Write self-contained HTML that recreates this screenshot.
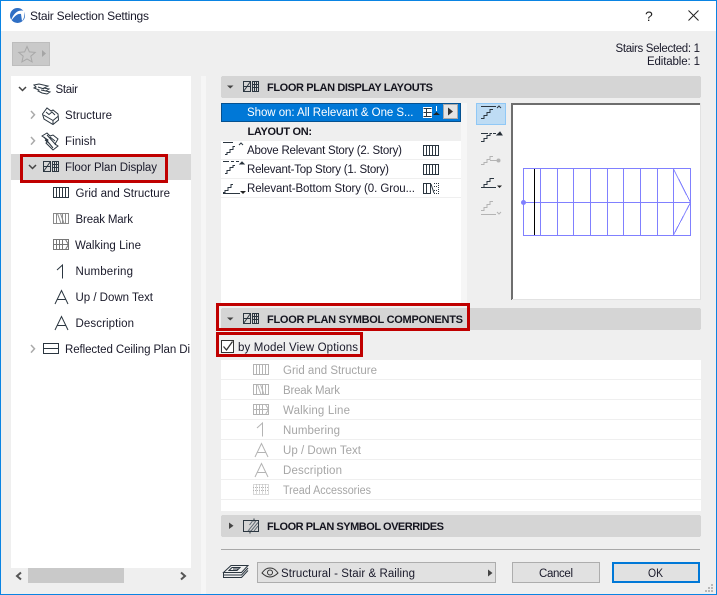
<!DOCTYPE html>
<html><head><meta charset="utf-8"><title>Stair Selection Settings</title>
<style>
html,body{margin:0;padding:0;background:#efefef;width:717px;height:595px;overflow:hidden}
svg{display:block;position:absolute;left:0;top:0}
text{font-family:"Liberation Sans",sans-serif;font-size:11.5px;fill:#1a1a2a}
.b{font-weight:bold;font-size:11px;fill:#14141e}
.g{fill:#a6a6a6}
.i{fill:none;stroke:#2b3640;stroke-width:1}
.l{fill:none;stroke:#b4b4b4;stroke-width:1}
</style></head><body>
<svg width="717" height="595" viewBox="0 0 717 595" xmlns="http://www.w3.org/2000/svg" shape-rendering="crispEdges">
<defs>
<g id="grid"><rect x=".5" y=".5" width="15" height="10"/><path d="M3.5 .5v10M6.5 .5v10M9.500 .5v10M12.500 .5v10"/></g>
<g id="brk"><rect x=".5" y=".5" width="15" height="10"/><path d="M3.500 .5v10M12.500 .5v10"/><path d="M4.500 .5l3.500 10M7.500 .5l3.500 10M9.500 .5v10" shape-rendering="auto"/></g>
<g id="walk"><rect x=".5" y=".5" width="15" height="10"/><path d="M.5 5.5h15M3.5 .5v10M6.5 .5v10M9.5 .5v10"/><path d="M12.5 .5l3 5-3 5" shape-rendering="auto"/></g>
<g id="num"><path d="M6.5 14.500V1L1 6" shape-rendering="auto"/></g>
<g id="aa"><path d="M0 14L6.500 .5L13 14M2.500 9.500h8" shape-rendering="auto"/></g>
<g id="plan"><rect x=".5" y=".5" width="7" height="10"/><path d="M.5 5.5h7"/><path d="M.5 10.5l7-10" shape-rendering="auto"/><path d="M9.5 .5h6v10h-6zM9.5 3.5h6M9.5 6.5h6M11.5 .5v10M13.5 .5v10"/></g>
</defs>

<!-- window -->
<rect x="0" y="0" width="717" height="595" fill="#0a84e3"/>
<rect x="1" y="1" width="715" height="593" fill="#efefef"/>
<rect x="1" y="1" width="715" height="30" fill="#fff"/>

<!-- logo -->
<circle cx="17.500" cy="15.500" r="7.500" fill="#2f6fc4" shape-rendering="auto"/>
<path d="M11 21C13 14 18 9 24 11C25 15 24 19 22 21L21 14C17 13 14 17 11 21Z" fill="#fff" shape-rendering="auto"/>
<text x="30" y="20" textLength="119" style="font-size:12px">Stair Selection Settings</text>
<text x="645" y="21" style="font-size:14px;fill:#222">?</text>
<path d="M688.500 10.500l10 10M698.500 10.500l-10 10" stroke="#222" fill="none" shape-rendering="auto"/>

<!-- favorites -->
<rect x="12.500" y="42.500" width="37" height="23" fill="#c9c9c9" stroke="#bdbdbd"/>
<path d="M27 46.500l2.400 5.400 5.800.5-4.400 3.800 1.300 5.700-5.100-3-5.100 3 1.300-5.700-4.400-3.800 5.800-.5z" fill="none" stroke="#a8a8a8" shape-rendering="auto"/>
<path d="M42 50l4 3.500-4 3.500z" fill="#a5a5a5" shape-rendering="auto"/>
<text x="615.500" y="52" textLength="84.500">Stairs Selected: 1</text>
<text x="647" y="65" textLength="53">Editable: 1</text>

<!-- tree -->
<rect x="11" y="76" width="180" height="492" fill="#fff"/>
<rect x="11" y="154" width="180" height="26" fill="#d8d8d8"/>
<rect x="201" y="76" width="5" height="518" fill="#f6f6f6"/>
<g fill="none" stroke-width="1.500" shape-rendering="auto">
<path d="M19 87l3.500 3.500 3.500-3.500" stroke="#444"/>
<path d="M31 111l3.500 3.800-3.500 3.800M31 137l3.500 3.800-3.500 3.800M31 345l3.500 3.800-3.500 3.800" stroke="#aaa"/>
<path d="M29 165l3.500 3.500 3.500-3.500" stroke="#444"/>
</g>
<!-- stair / structure / finish icons -->
<g class="i" shape-rendering="auto">
<path d="M34 85l5-1 9 2-4 2 5 1-3 2 4 1-3 2-5-1-4-2 1-1-5-2 2-1z"/>
<path d="M38 87l6 2M41 90l5 1"/>
<path d="M42.500 114L47 108L51 111L53 110L58 114L58.500 120L53 124.500L44 119Z"/>
<path d="M46 112L49 114.500L52 112L55 115M43.500 115L53 120.500V124.500M53 120.500L58.500 116"/>
<path d="M42 136L47 133L50 136L53 135L58 139L55 144L58 146L53 150L50 147L46 143L48 140Z"/>
<path d="M44 137L53 148M47 135L56 145M50 137L55 141M45 140L50 144"/>
</g>
<use href="#plan" x="43" y="161" class="i"/>
<use href="#grid" x="53" y="187" class="i"/>
<use href="#brk" x="53" y="213" style="stroke:#8a8a8a;fill:none"/>
<use href="#walk" x="53" y="239" style="stroke:#777;fill:none"/>
<use href="#num" x="56" y="264" class="i"/>
<use href="#aa" x="55" y="290" class="i"/>
<use href="#aa" x="55" y="316" class="i"/>
<g class="i"><rect x="43.500" y="343.500" width="15" height="10"/><path d="M43.500 348.500h15"/></g>

<text x="55.500" y="93" textLength="22.500">Stair</text>
<text x="65" y="119" textLength="47">Structure</text>
<text x="65" y="145" textLength="31">Finish</text>
<text x="65" y="171" textLength="92">Floor Plan Display</text>
<text x="75.500" y="197" textLength="94.500">Grid and Structure</text>
<text x="75.500" y="223" textLength="57.500">Break Mark</text>
<text x="75" y="249" textLength="66">Walking Line</text>
<text x="75.500" y="275" textLength="57.500">Numbering</text>
<text x="75.500" y="301" textLength="77.500">Up / Down Text</text>
<text x="75.500" y="327" textLength="58.500">Description</text>
<svg x="0" y="340" width="191" height="20"><text x="65" y="13" textLength="125">Reflected Ceiling Plan Di</text></svg>
<!-- tree scroll -->
<rect x="28" y="568" width="96" height="15" fill="#c9c9c9"/>
<path d="M21 572.500l-4 3.500 4 3.500M181 572.500l4 3.500-4 3.500" fill="none" stroke="#555" stroke-width="2" shape-rendering="auto"/>

<!-- section headers -->
<rect x="221" y="76" width="480" height="22" rx="2" fill="#d5d5d5"/>
<rect x="221" y="308" width="480" height="22" rx="2" fill="#d5d5d5"/>
<rect x="221" y="515" width="480" height="22" rx="2" fill="#d5d5d5"/>
<path d="M227 85.500h6.500l-3.250 3zM227 317.500h6.500l-3.250 3zM229 522.500l4.500 3.250-4.500 3.250z" fill="#444" shape-rendering="auto"/>
<use href="#plan" x="243" y="81" class="i"/>
<use href="#plan" x="243" y="313" class="i"/>
<path d="M243.500 520.500h15v11h-15z" fill="none" stroke="#2b3640"/>
<g shape-rendering="auto" fill="none" stroke="#5b6670">
<path d="M248 531l8-10M251 531l7-8.500M254 531l4-5M252.500 521l-3 4"/>
</g>
<path d="M254 518.500v3M250 530.500v3" stroke="#2b3640"/>
<text class="b" x="267" y="91" textLength="166">FLOOR PLAN DISPLAY LAYOUTS</text>
<text class="b" x="267" y="323" textLength="196">FLOOR PLAN SYMBOL COMPONENTS</text>
<text class="b" x="267" y="530" textLength="177">FLOOR PLAN SYMBOL OVERRIDES</text>

<!-- layouts list -->
<rect x="221" y="103" width="240" height="200" fill="#fff"/>
<rect x="461" y="103" width="6" height="200" fill="#f6f6f6"/>
<rect x="221" y="103" width="240" height="19" fill="#0078d7"/>
<rect x="221.500" y="103.500" width="239" height="18" fill="none" stroke="#0a2a4a" stroke-dasharray="1 1"/>
<rect x="221" y="122" width="240" height="19" fill="#efefef"/>
<path d="M221 159.500h240M221 178.500h240M221 197.500h240" stroke="#efefef"/>
<text x="247" y="116" textLength="166.500" style="fill:#fff">Show on: All Relevant &amp; One S...</text>
<text class="b" x="247.500" y="135" textLength="64.500">LAYOUT ON:</text>
<text x="247" y="154" textLength="155">Above Relevant Story (2. Story)</text>
<text x="247" y="173" textLength="142">Relevant-Top Story (1. Story)</text>
<text x="247" y="192" textLength="168">Relevant-Bottom Story (0. Grou...</text>
<!-- show-on icons -->
<rect x="423" y="107" width="9" height="11" fill="#fff"/>
<path d="M423.500 108.500h8M423.500 112.500h8M423.500 116.500h8M426.500 108v9" stroke="#2b3640" fill="none"/>
<path d="M433 115l3.500-3 3.500 3z" fill="#222" shape-rendering="auto"/><rect x="436" y="106" width="1" height="5" fill="#fff"/>
<rect x="443.500" y="104.500" width="14" height="14" fill="#e4e4e4" stroke="#aaa"/>
<path d="M448 107.500l5 4-5 4z" fill="#333" shape-rendering="auto"/>
<!-- rows icons -->
<use href="#grid" x="423" y="145" class="i"/>
<use href="#grid" x="423" y="164" class="i"/>
<g class="i"><rect x="423.500" y="183.500" width="7" height="10"/><path d="M426.500 183.500v10"/><path d="M431 184l3 9" shape-rendering="auto"/><path d="M434 183.500h4.500v10h-4.500M434 186.500h4M434 190.500h4" stroke-dasharray="1 1"/></g>
<!-- row stair icons -->
<g class="i">
<path d="M223 142.500h10M225 154.500h2v-2h3v-3h3v-3h2"/><path d="M239 145l2-2 2 2" shape-rendering="auto"/>
<path d="M223 161.500h6M231 161.500h3M225 173.500h2v-3h3v-3h3v-2h2M236 161.500h3"/><path d="M240 164l2-2 2 2z" fill="#222" shape-rendering="auto"/>
<path d="M223 192.500h2v-2h3v-3h3v-3h2"/><path d="M223 193.500h17"/><path d="M240 191h6l-3 3z" fill="#222" stroke="none" shape-rendering="auto"/>
</g>

<!-- side buttons -->
<rect x="476.500" y="103.500" width="29" height="21" fill="#bedcf4" stroke="#90c8f6"/>
<g class="i">
<path d="M481 106.500h15M481 118.500h3v-3h3v-3h3v-3h3"/><path d="M497 108l2-2 2 2" shape-rendering="auto"/>
<path d="M481 133.500h7M481 141.500h3v-3h3v-3h3v-2h2"/><path d="M493 133.500h3"/><path d="M497 135l3-3 2 3z" fill="#222" shape-rendering="auto"/>
<path d="M481 187.500h15M481 187.500h3v-3h3v-3h3v-3h4"/><path d="M497 185.500h5l-2.500 2.500z" fill="#222" stroke="none" shape-rendering="auto"/>
</g>
<g class="l">
<path d="M481 164.500h3v-2h3v-3h3v-3h3M490 160.500h7"/><circle cx="498.500" cy="160.500" r="1.500" fill="#b4b4b4" shape-rendering="auto"/>
<path d="M481 214.500h15M481 210.500h3v-3h3v-3h3v-3h3"/><path d="M497 212l2 2 2-2" shape-rendering="auto"/>
</g>

<!-- preview -->
<rect x="511" y="103" width="190" height="197" fill="#fff"/>
<path d="M512 300V104H700" fill="none" stroke="#6e6e6e" stroke-width="2"/>
<path d="M512 299.500H700.500V103" fill="none" stroke="#e2e2e2"/>
<g fill="none" stroke="#8080ff">
<rect x="523.500" y="168.500" width="167" height="67"/>
<path d="M523.500 202.500h167M540.500 168.500v67M557.500 168.500v67M573.500 168.500v67M590.500 168.500v67M607.500 168.500v67M623.500 168.500v67M640.500 168.500v67M657.500 168.500v67M673.500 168.500v67"/>
<path d="M673.500 169L690.500 202.500L673.500 235"/>
<circle cx="523.500" cy="202.500" r="2" fill="#8080ff" shape-rendering="auto"/>
</g>
<path d="M534.500 169v66" stroke="#000"/>

<!-- checkbox -->
<rect x="221.500" y="340.500" width="12" height="12" fill="#fff" stroke="#333"/>
<path d="M223.500 346.500l3 3.500 6-8.500" fill="none" stroke="#333" stroke-width="1.300" shape-rendering="auto"/>
<text x="238" y="351" textLength="120">by Model View Options</text>

<!-- components list -->
<rect x="221" y="360" width="480" height="151" fill="#fff"/>
<path d="M221 379.500h480M221 399.500h480M221 419.500h480M221 439.500h480M221 459.500h480M221 479.500h480M221 499.500h480" stroke="#efefef"/>
<use href="#grid" x="253" y="364" class="l"/>
<use href="#brk" x="253" y="384" class="l"/>
<use href="#walk" x="253" y="404" class="l"/>
<use href="#num" x="256" y="422" class="l"/>
<use href="#aa" x="255" y="443" class="l"/>
<use href="#aa" x="255" y="463" class="l"/>
<g class="l" stroke-dasharray="1 1"><use href="#grid" x="253" y="484"/><path d="M253 487.500h16M253 490.500h16"/></g>
<text class="g" x="283" y="374" textLength="94">Grid and Structure</text>
<text class="g" x="283" y="394" textLength="57">Break Mark</text>
<text class="g" x="283" y="414" textLength="67">Walking Line</text>
<text class="g" x="283" y="434" textLength="57">Numbering</text>
<text class="g" x="283" y="454" textLength="78">Up / Down Text</text>
<text class="g" x="283" y="474" textLength="59">Description</text>
<text class="g" x="283" y="494" textLength="88" lengthAdjust="spacingAndGlyphs">Tread Accessories</text>

<!-- bottom -->
<path d="M221 549.500h479" stroke="#a8a8a8"/>
<g class="i" shape-rendering="auto">
<path d="M223.500 572.500L231 565.500H248L241.500 572.500Z"/>
<path d="M223.500 572.500V575H241.500L248 568M223.500 575V577.500H241.500L248 570.500"/>
<path d="M229 570.500L232 567.500H240L237 570.500ZM233 569H238"/>
</g>
<rect x="257.500" y="562.500" width="238" height="20" fill="#e1e1e1" stroke="#adadad"/>
<path d="M262 573c3-4 5-5 8-5s5 1 8 5c-3 3-5 4-8 4s-5-1-8-4z" fill="none" stroke="#333" shape-rendering="auto"/>
<circle cx="270" cy="572.500" r="2.500" fill="none" stroke="#333" shape-rendering="auto"/>
<text x="281" y="577" textLength="134">Structural - Stair &amp; Railing</text>
<path d="M488 569.500l4.500 3.500-4.500 3.500z" fill="#444" shape-rendering="auto"/>
<rect x="512.500" y="562.500" width="87" height="20" fill="#e1e1e1" stroke="#adadad"/>
<text x="539" y="577" textLength="34">Cancel</text>
<rect x="613" y="563" width="86" height="19" fill="#e1e1e1" stroke="#0078d7" stroke-width="2"/>
<text x="648" y="577" textLength="15" lengthAdjust="spacingAndGlyphs">OK</text>
<path d="M711 584h2v2h-2zM708 587h2v2h-2zM711 587h2v2h-2zM705 590h2v2h-2zM708 590h2v2h-2zM711 590h2v2h-2z" fill="#b8b8b8"/>

<!-- red highlight boxes -->
<g fill="none" stroke="#c00000" stroke-width="3">
<rect x="21.500" y="155.500" width="145" height="26"/>
<rect x="217.500" y="304.500" width="251" height="25"/>
<rect x="217.500" y="333.500" width="144" height="22"/>
</g>
</svg>
</body></html>
